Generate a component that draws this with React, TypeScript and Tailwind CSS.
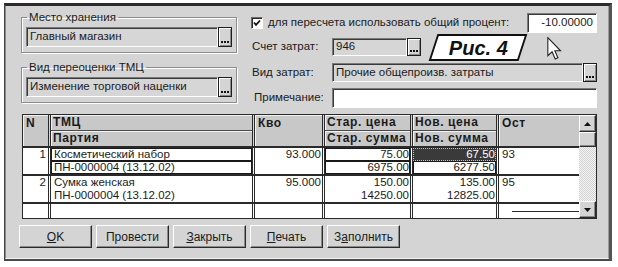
import React from 'react';

const sunken =
  'border border-t-[#7a7a7a] border-l-[#7a7a7a] border-b-white border-r-white shadow-[inset_1px_1px_0_#3a3a3a]';
const raised =
  'border border-t-white border-l-white border-b-[#2a2a2a] border-r-[#2a2a2a] shadow-[inset_-1px_-1px_0_#8a8a8a]';
const sep = 'border-r-[3px] border-double border-r-[#2a2a2a]';

function DotsButton({ h }: { h: string }) {
  return (
    <div
      className={`w-[14px] ${h} shrink-0 bg-[#d4d4d4] border border-[#1e1e1e] shadow-[inset_1px_1px_0_#fff,inset_-1px_-1px_0_#888] flex items-end justify-center gap-[1px] pb-[3px]`}
    >
      <span className="w-[2px] h-[2px] bg-[#111]" />
      <span className="w-[2px] h-[2px] bg-[#111]" />
      <span className="w-[2px] h-[2px] bg-[#111]" />
    </div>
  );
}

function Field({ className, children }: { className: string; children?: React.ReactNode }) {
  return (
    <div className={`${sunken} ${className} flex items-center px-[3px] whitespace-nowrap overflow-hidden`}>
      {children}
    </div>
  );
}

function Group({ title, value }: { title: string; value: string }) {
  return (
    <fieldset className="border border-[#8c8c8c] shadow-[1px_1px_0_#fff,inset_1px_1px_0_#fff] px-[4px] pb-[5px]">
      <legend className="ml-[1px] px-[2px] leading-[14px]">{title}</legend>
      <div className="mt-[3px] flex">
        <Field className="flex-1 h-[20px] bg-[#d6d6d6]">{value}</Field>
        <DotsButton h="h-[20px]" />
      </div>
    </fieldset>
  );
}

function HeadSpan({ w, last, children }: { w: string; last?: boolean; children: string }) {
  return (
    <div className={`${w} h-full ${last ? '' : sep}`}>
      <div className="h-full bg-[#c8c8c8] shadow-[inset_1px_1px_0_#f2f2f2] px-[3px] text-[12px] leading-[16px] font-bold tracking-[0.6px]">
        {children}
      </div>
    </div>
  );
}

function HeadPair({ w, top, bottom }: { w: string; top: string; bottom: string }) {
  return (
    <div className={`${w} h-full flex flex-col ${sep}`}>
      <div className="h-[16px] bg-[#c8c8c8] border-b border-[#4a4a4a] shadow-[inset_1px_1px_0_#f2f2f2] px-[2px] text-[12px] leading-[15px] font-bold tracking-[0.6px] whitespace-nowrap overflow-hidden">
        {top}
      </div>
      <div className="flex-1 bg-[#c8c8c8] shadow-[inset_1px_1px_0_#f2f2f2] px-[2px] text-[12px] leading-[15px] font-bold tracking-[0.6px] whitespace-nowrap overflow-hidden">
        {bottom}
      </div>
    </div>
  );
}

type Rec = {
  n: string;
  name: string;
  party: string;
  qty: string;
  oldPrice: string;
  oldSum: string;
  newPrice: string;
  newSum: string;
  rest: string;
  current?: boolean;
};

const rows: Rec[] = [
  {
    n: '1',
    name: 'Косметический набор',
    party: 'ПН-0000004 (13.12.02)',
    qty: '93.000',
    oldPrice: '75.00',
    oldSum: '6975.00',
    newPrice: '67.50',
    newSum: '6277.50',
    rest: '93',
    current: true,
  },
  {
    n: '2',
    name: 'Сумка женская',
    party: 'ПН-0000004 (13.12.02)',
    qty: '95.000',
    oldPrice: '150.00',
    oldSum: '14250.00',
    newPrice: '135.00',
    newSum: '12825.00',
    rest: '95',
  },
];

function Record({ r }: { r: Rec }) {
  const box = r.current ? 'shadow-[inset_0_0_0_1px_#1a1a1a]' : '';
  return (
    <div className="flex h-[28px] border-b-2 border-[#2a2a2a] bg-white">
      <div className={`w-[28px] h-full ${sep} text-right pr-[2px] leading-[13px]`}>{r.n}</div>
      <div className={`w-[204px] h-full ${sep} flex flex-col`}>
        <div className={`h-[13px] leading-[13px] px-[3px] ${box}`}>{r.name}</div>
        <div className={`h-[13px] leading-[13px] px-[3px] ${box}`}>{r.party}</div>
      </div>
      <div className={`w-[70px] h-full ${sep} text-right pr-[1px] leading-[13px]`}>{r.qty}</div>
      <div className={`w-[88px] h-full ${sep} flex flex-col text-right`}>
        <div className={`h-[13px] leading-[13px] pr-[1px] ${box}`}>{r.oldPrice}</div>
        <div className={`h-[13px] leading-[13px] pr-[1px] ${box}`}>{r.oldSum}</div>
      </div>
      <div className={`w-[86px] h-full ${sep} flex flex-col text-right`}>
        {r.current ? (
          <div className="h-[13px] leading-[13px] pr-[1px] bg-[#3a3a3a] text-white outline outline-1 outline-dotted outline-[#c0c0c0] outline-offset-[-1px]">
            {r.newPrice}
          </div>
        ) : (
          <div className="h-[13px] leading-[13px] pr-[1px]">{r.newPrice}</div>
        )}
        <div className={`h-[13px] leading-[13px] pr-[1px] ${box}`}>{r.newSum}</div>
      </div>
      <div className="w-[80px] h-full pl-[3px] leading-[13px]">{r.rest}</div>
    </div>
  );
}

function Arrow({ up }: { up?: boolean }) {
  return (
    <div className={`h-[17px] bg-[#d4d4d4] ${raised} flex items-center justify-center`}>
      <svg width="7" height="4" viewBox="0 0 7 4">
        {up ? <polygon points="3.5,0 7,4 0,4" fill="#111" /> : <polygon points="0,0 7,0 3.5,4" fill="#111" />}
      </svg>
    </div>
  );
}

function Btn({ children }: { children: React.ReactNode }) {
  return (
    <div className={`w-[73px] h-[23px] bg-[#d4d4d4] ${raised} flex items-center justify-center`}>
      {children}
    </div>
  );
}

export default function App() {
  return (
    <div className="w-[618px] h-[267px] bg-white pt-[3px] pl-[4px] font-['Liberation_Sans',Arial,sans-serif] text-[11.5px] text-[#1b1b1b]">
      <div className="w-[608px] h-[258px] bg-[#d4d4d4] border-t-[3px] border-t-[#2b2b2b] border-l-2 border-l-[#444] border-r-[3px] border-r-[#555] border-b-2 border-b-[#4a4a4a]">
        <div className="h-full pl-[13px] pt-[4px] border-l border-l-[#8a8a8a] border-r border-r-[#9a9a9a] border-b border-b-[#f2f2f2] -ml-px">
          {/* top section */}
          <div className="ml-[2px] flex gap-[13px]">
            <div className="w-[216px] flex flex-col">
              <Group title="Место хранения" value="Главный магазин" />
              <div className="mt-[7px]">
                <Group title="Вид переоценки ТМЦ" value="Изменение торговой наценки" />
              </div>
            </div>

            <div className="w-[347px] pt-[3px] flex flex-col">
              <div className="h-[20px] flex items-center">
                <div className="ml-[1px] w-[12px] h-[12px] bg-white border border-t-[#6a6a6a] border-l-[#6a6a6a] border-b-white border-r-white shadow-[inset_1px_1px_0_#2a2a2a] flex items-center justify-center">
                  <svg width="8" height="8" viewBox="0 0 8 8">
                    <polyline points="1,3.5 3,5.8 7,1.5" fill="none" stroke="#111" strokeWidth="1.8" />
                  </svg>
                </div>
                <span className="ml-[5px] whitespace-nowrap">для пересчета использовать общий процент:</span>
                <Field className="ml-auto w-[70px] h-[20px] bg-white justify-end">-10.00000</Field>
              </div>

              <div className="mt-[5px] h-[18px] flex items-center">
                <span className="w-[82px] pl-[2px] shrink-0">Счет затрат:</span>
                <Field className="w-[75px] h-[18px] bg-[#d6d6d6]">946</Field>
                <DotsButton h="h-[18px]" />
                <div className="ml-[12px] w-[90px] h-[27px] shrink-0 -skew-x-[18deg] border-2 border-[#111] bg-white flex items-center justify-center">
                  <span className="skew-x-[18deg] text-[20px] leading-[20px] font-bold italic text-[#111]">Рис. 4</span>
                </div>
                <svg className="ml-[24px] mt-[3px] shrink-0" width="15" height="23" viewBox="0 0 12 19">
                  <path
                    d="M0.5 0.5 L0.5 15.5 L4 12.2 L6.6 18.2 L8.8 17.2 L6.3 11.4 L11 11.4 Z"
                    fill="#fff"
                    stroke="#222"
                    strokeWidth="0.9"
                  />
                </svg>
              </div>

              <div className="mt-[7px] h-[19px] flex items-center">
                <span className="w-[82px] pl-[2px] shrink-0">Вид затрат:</span>
                <Field className="flex-1 h-[19px] bg-[#d6d6d6]">Прочие общепроизв. затраты</Field>
                <DotsButton h="h-[19px]" />
              </div>

              <div className="mt-[6px] h-[20px] flex items-center">
                <span className="w-[82px] pl-[4px] shrink-0">Примечание:</span>
                <Field className="flex-1 h-[20px] bg-white" />
              </div>
            </div>
          </div>

          {/* table */}
          <div className="mt-[6px] ml-[3px] w-[575px] h-[105px] border border-[#2a2a2a] flex">
            <div className="w-[556px] flex flex-col">
              <div className="flex h-[33px] border-b-2 border-[#2a2a2a]">
                <HeadSpan w="w-[28px]">N</HeadSpan>
                <HeadPair w="w-[204px]" top="ТМЦ" bottom="Партия" />
                <HeadSpan w="w-[70px]">Кво</HeadSpan>
                <HeadPair w="w-[88px]" top="Стар. цена" bottom="Стар. сумма" />
                <HeadPair w="w-[86px]" top="Нов. цена" bottom="Нов. сумма" />
                <HeadSpan w="w-[80px]" last>
                  Ост
                </HeadSpan>
              </div>
              {rows.map((r) => (
                <Record key={r.n} r={r} />
              ))}
              <div className="flex flex-1 bg-white">
                <div className={`w-[28px] ${sep}`} />
                <div className={`w-[204px] ${sep}`} />
                <div className={`w-[70px] ${sep}`} />
                <div className={`w-[88px] ${sep}`} />
                <div className={`w-[86px] ${sep}`} />
                <div className="w-[80px] flex flex-col justify-end pb-[6px]">
                  <div className="ml-[13px] border-b border-[#2a2a2a]" />
                </div>
              </div>
            </div>
            <div className="w-[17px] flex flex-col">
              <Arrow up />
              <div className={`h-[15px] bg-[#d4d4d4] ${raised}`} />
              <div className="flex-1 bg-[repeating-conic-gradient(#f4f4f4_0%_25%,#d2d2d2_0%_50%)] bg-[length:2px_2px]" />
              <Arrow />
            </div>
          </div>

          {/* buttons */}
          <div className="mt-[6px] flex gap-[4px] text-[12px]">
            <Btn>
              <u>О</u>K
            </Btn>
            <Btn>Провести</Btn>
            <Btn>
              <u>З</u>акрыть
            </Btn>
            <Btn>
              <u>П</u>ечать
            </Btn>
            <Btn>
              З<u>а</u>полнить
            </Btn>
          </div>
        </div>
      </div>
    </div>
  );
}
